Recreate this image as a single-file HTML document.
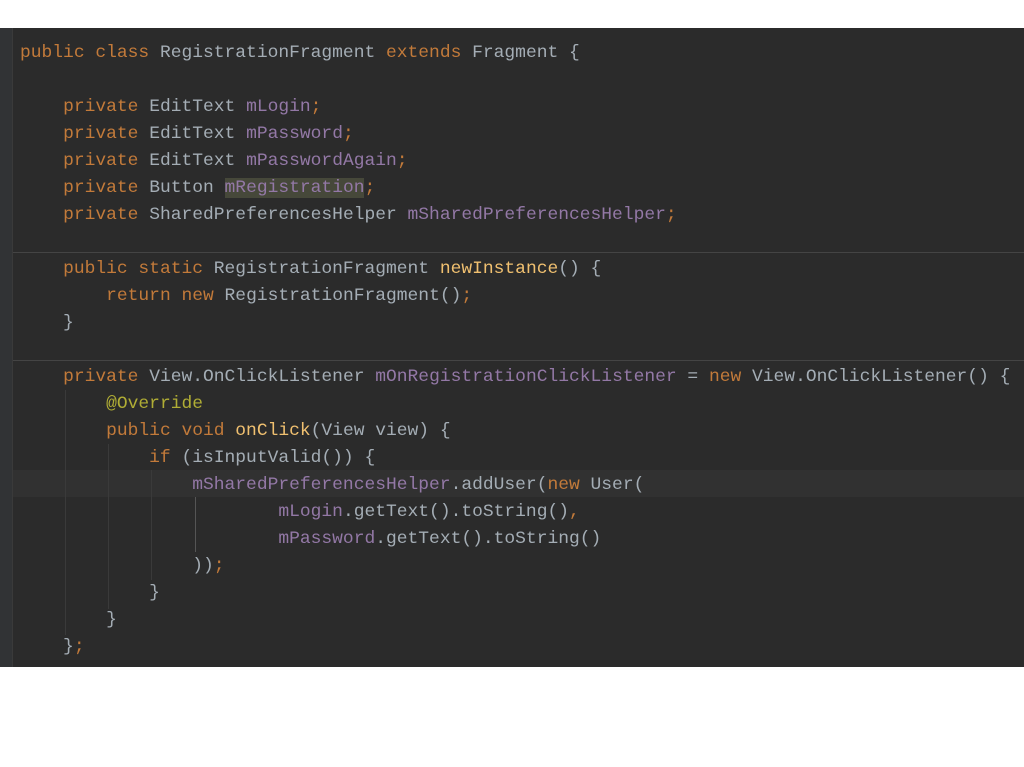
<!DOCTYPE html>
<html><head><meta charset="utf-8"><style>
body{margin:0;width:1024px;height:767px;background:#fff;overflow:hidden;position:relative}
#ed{position:absolute;left:0;top:28px;width:1024px;height:639px;background:#2b2b2b}
#gut{position:absolute;left:0;top:28px;width:12px;height:639px;background:#313335;border-right:1px solid #3a3a3a}
.l{position:absolute;left:20px;height:27px;line-height:27px;font-family:"Liberation Mono",monospace;font-size:17.95px;color:#a4adb5;white-space:pre}
.k{color:#c27a3a}.f{color:#9378a6}.m{color:#f0c070}.a{color:#b0ad35}
.sep{position:absolute;left:13px;width:1011px;height:1px;background:#444}
.hl{position:absolute;left:13px;width:1011px;top:470px;height:27px;background:#313131}
.g{position:absolute;width:1px;background:#3a3a3a}
</style></head><body>
<div id="ed"></div><div id="gut"></div>
<div class="hl"></div>
<div class="sep" style="top:252px"></div>
<div class="sep" style="top:360px"></div>
<div class="g" style="left:65px;top:390px;height:245px"></div>
<div class="g" style="left:108px;top:444px;height:165px"></div>
<div class="g" style="left:151px;top:470px;height:110px"></div>
<div class="g" style="left:195px;top:497px;height:55px;background:#555"></div>
<div class="l" style="top:40px"><span class="k">public class </span>RegistrationFragment <span class="k">extends </span>Fragment {</div>
<div class="l" style="top:94px">    <span class="k">private </span>EditText <span class="f">mLogin</span><span class="k">;</span></div>
<div class="l" style="top:121px">    <span class="k">private </span>EditText <span class="f">mPassword</span><span class="k">;</span></div>
<div class="l" style="top:148px">    <span class="k">private </span>EditText <span class="f">mPasswordAgain</span><span class="k">;</span></div>
<div class="l" style="top:175px">    <span class="k">private </span>Button <span class="f" style="background:#46483a">mRegistration</span><span class="k">;</span></div>
<div class="l" style="top:202px">    <span class="k">private </span>SharedPreferencesHelper <span class="f">mSharedPreferencesHelper</span><span class="k">;</span></div>
<div class="l" style="top:256px">    <span class="k">public static </span>RegistrationFragment <span class="m">newInstance</span>() {</div>
<div class="l" style="top:283px">        <span class="k">return new </span>RegistrationFragment()<span class="k">;</span></div>
<div class="l" style="top:310px">    }</div>
<div class="l" style="top:364px">    <span class="k">private </span>View.OnClickListener <span class="f">mOnRegistrationClickListener</span> = <span class="k">new </span>View.OnClickListener() {</div>
<div class="l" style="top:391px">        <span class="a">@Override</span></div>
<div class="l" style="top:418px">        <span class="k">public void </span><span class="m">onClick</span>(View view) {</div>
<div class="l" style="top:445px">            <span class="k">if </span>(isInputValid()) {</div>
<div class="l" style="top:472px">                <span class="f">mSharedPreferencesHelper</span>.addUser(<span class="k">new </span>User(</div>
<div class="l" style="top:499px">                        <span class="f">mLogin</span>.getText().toString()<span class="k">,</span></div>
<div class="l" style="top:526px">                        <span class="f">mPassword</span>.getText().toString()</div>
<div class="l" style="top:553px">                ))<span class="k">;</span></div>
<div class="l" style="top:580px">            }</div>
<div class="l" style="top:607px">        }</div>
<div class="l" style="top:634px">    }<span class="k">;</span></div>
</body></html>
